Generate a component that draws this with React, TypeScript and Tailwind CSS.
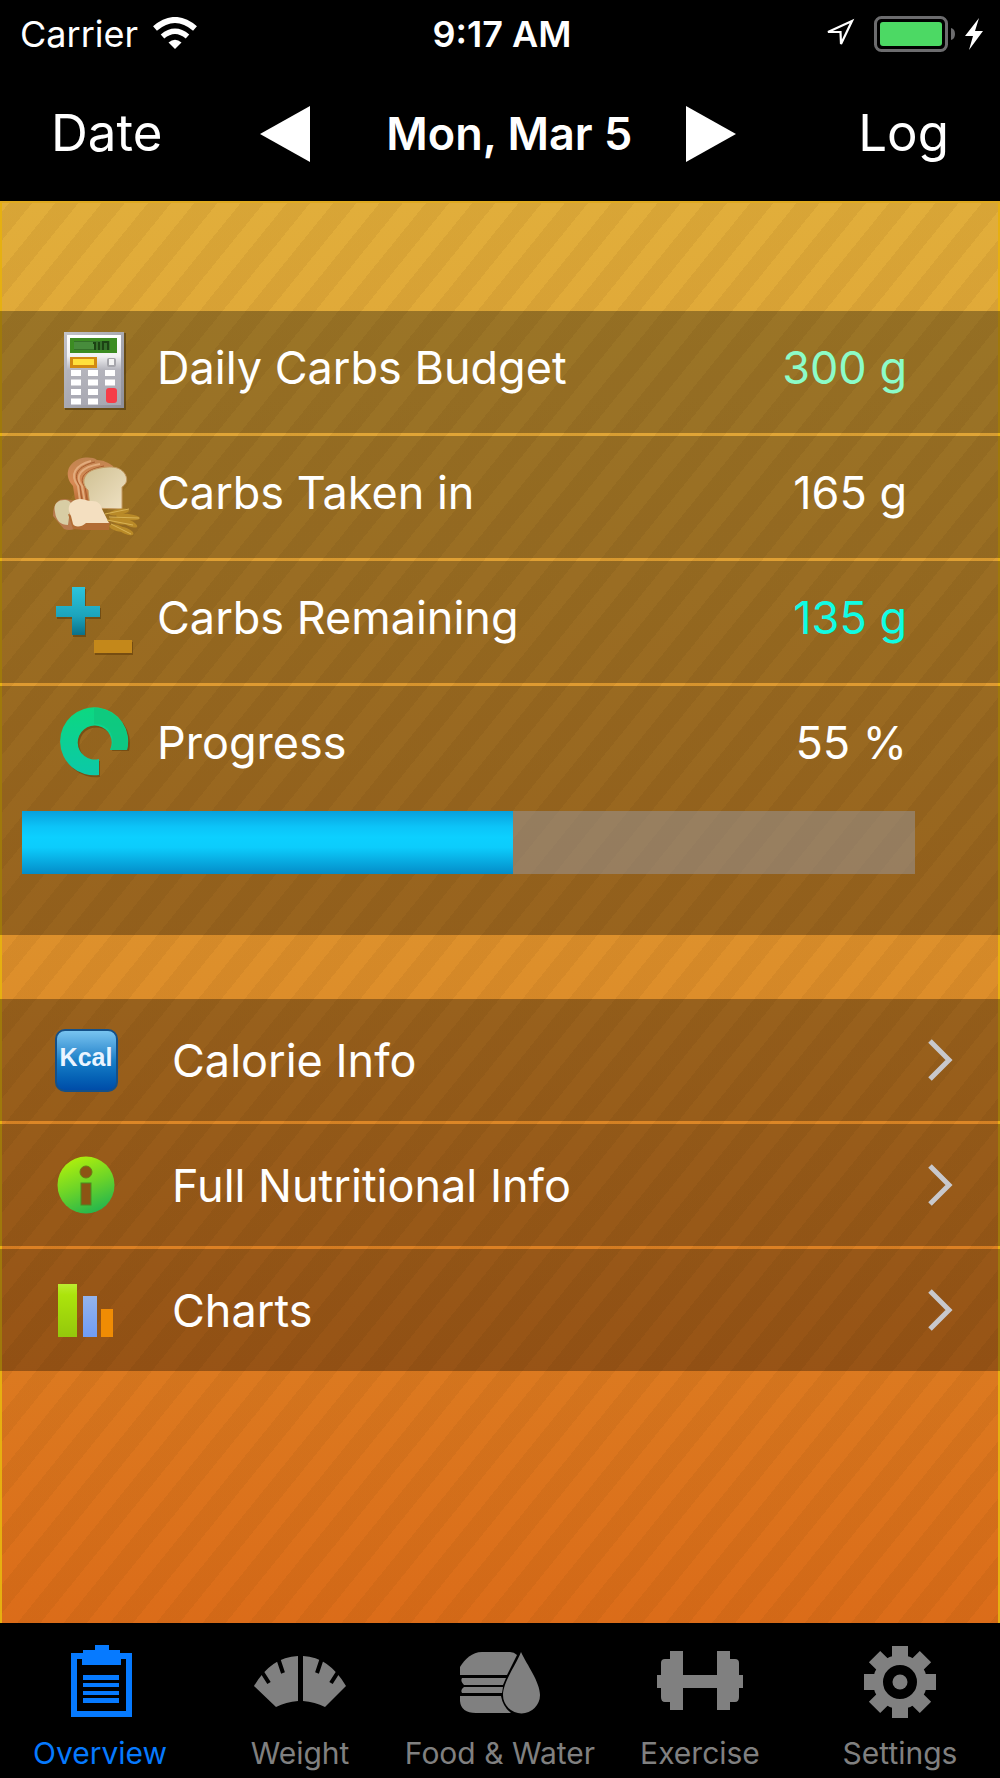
import type { ReactNode } from "react";

function CalculatorIcon() {
  const keys = [0, 1, 2, 3].flatMap((r) => [0, 1, 2].map((c) => ({ r, c })));
  return (
    <svg width="64" height="80" viewBox="0 0 64 80" aria-hidden="true">
      <defs>
        <linearGradient id="calcBody" x1="0" y1="0" x2="1" y2="1">
          <stop offset="0" stopColor="#c4c4ca" />
          <stop offset="1" stopColor="#8e8e98" />
        </linearGradient>
        <linearGradient id="calcFace" x1="0" y1="0" x2="0" y2="1">
          <stop offset="0" stopColor="#ffffff" />
          <stop offset="0.3" stopColor="#f2f2f4" />
          <stop offset="0.5" stopColor="#b4b4bc" />
          <stop offset="1" stopColor="#a8a8b2" />
        </linearGradient>
      </defs>
      <rect x="2" y="2" width="61" height="77" fill="#4a350c" opacity="0.6" />
      <rect x="1" y="1" width="60" height="76" fill="url(#calcBody)" />
      <rect x="4" y="4" width="54" height="70" fill="url(#calcFace)" />
      <rect x="7" y="7" width="47" height="15" fill="#3c8c22" />
      <rect x="11" y="10" width="36" height="9" fill="#34702a" />
      <rect x="11" y="11" width="20" height="7" fill="#478c3c" />
      <path d="M30 12h2v7M36 19v-8M40 19v-8h5v8" fill="none" stroke="#1c4214" strokeWidth="2" />
      <rect x="7" y="26" width="27" height="11" fill="#d28a10" />
      <rect x="10" y="28" width="21" height="6" fill="#ffe03c" />
      <rect x="44" y="27" width="9" height="9" rx="2" fill="#a6a6ac" />
      <rect x="46" y="28" width="5" height="6" fill="#f4f4f4" />
      {keys.map(({ r, c }) =>
        c === 2 && r > 1 ? null : (
          <rect key={`${r}-${c}`} x={8 + c * 17} y={39 + r * 9.5} width="10" height="6" fill="#fff" />
        ),
      )}
      <rect x="43" y="57" width="11" height="15" rx="3" fill="#f63c48" />
    </svg>
  );
}

function BreadIcon() {
  return (
    <svg width="92" height="80" viewBox="0 0 92 80" aria-hidden="true">
      <defs>
        <linearGradient id="crumb" x1="0" y1="0" x2="1" y2="1">
          <stop offset="0" stopColor="#cfc092" />
          <stop offset="1" stopColor="#f0e2c4" />
        </linearGradient>
        <linearGradient id="crust" x1="0" y1="0" x2="0" y2="1">
          <stop offset="0" stopColor="#c08450" />
          <stop offset="0.5" stopColor="#d88a54" />
          <stop offset="1" stopColor="#b0642c" />
        </linearGradient>
      </defs>
      <path
        d="M26 43 L24 30 C15 20 18 8 30 3 C36 1 44 1 48 4 C54 4 60 7 64 10 L56 52 L38 52 Z"
        fill="url(#crust)"
      />
      <path d="M31 45L29 30C20 18 27 9 42 5M36 47L33 30C25 20 32 11 51 8" fill="none" stroke="#e2ab7c" strokeWidth="2" />
      <path d="M33 45L31 30C23 19 29 10 46 6M39 49L36 31C29 22 35 14 55 10" fill="none" stroke="#a85c30" />
      <path
        d="M41 52 L39 34 C31 27 35 16 47 13 C55 11 70 8 76 18 C80 25 76 29 73 31 V53 Z"
        fill="url(#crumb)"
        stroke="#c49a62"
      />
      <path d="M4 60 C4 47 9 43 16 43 L27 45 L30 70 C26 74 20 75 15 73 Z" fill="#b87a4e" />
      <path d="M6 56 C4 48 9 44 15 44 C22 44 24 48 21 54 L19 69 C12 69 7 65 6 56 Z" fill="#d8cda4" />
      <path d="M19 58 L24 73 L36 74 L60 74 L61 66 L36 64 Z" fill="#b26c34" />
      <path
        d="M22 60 C16 50 23 43 31 43 C35 43 38 45 43 45 C49 45 52 48 53 53 L60 67 L37 67 C32 72 25 71 24 68 Z"
        fill="#f4dfc0"
      />
      <g fill="#b98a28">
        <ellipse cx="70" cy="56" rx="10" ry="3" transform="rotate(-10 70 56)" />
        <ellipse cx="79" cy="61" rx="12" ry="3" transform="rotate(6 79 61)" />
        <ellipse cx="70" cy="65" rx="10" ry="3" transform="rotate(12 70 65)" />
        <ellipse cx="80" cy="67" rx="9" ry="3" transform="rotate(24 80 67)" />
        <ellipse cx="68" cy="72" rx="8" ry="3" transform="rotate(16 68 72)" />
        <ellipse cx="77" cy="75" rx="8" ry="3" transform="rotate(24 77 75)" />
      </g>
      <path d="M56 58l24-5M60 61l30 1M58 64l26 5M62 68l20 10" stroke="#d8b254" strokeWidth="1" />
    </svg>
  );
}

function PlusMinusIcon() {
  return (
    <svg width="80" height="70" viewBox="0 0 80 70" aria-hidden="true">
      <defs>
        <linearGradient id="plusFill" x1="0" y1="0" x2="0" y2="1">
          <stop offset="0" stopColor="#2cc4dc" />
          <stop offset="0.6" stopColor="#1ca4bc" />
          <stop offset="1" stopColor="#0c7088" />
        </linearGradient>
      </defs>
      <path d="M18 3h13v19h15v11H31v18H18V33H2V22h16z" fill="#5c3c0c" opacity="0.6" />
      <path d="M17 1h13v19h15v11H30v18H17V31H1V20h16z" fill="url(#plusFill)" />
      <rect x="40" y="56" width="38" height="13" fill="#6a430c" opacity="0.7" />
      <rect x="39" y="54" width="38" height="13" fill="#c4881a" />
    </svg>
  );
}

function RingIcon() {
  return (
    <svg width="70" height="78" viewBox="0 0 70 78" aria-hidden="true">
      <defs>
        <linearGradient id="ringFill" x1="0" y1="0" x2="0" y2="1">
          <stop offset="0" stopColor="#0cd880" />
          <stop offset="1" stopColor="#0cc8a8" />
        </linearGradient>
      </defs>
      <path d="M40 70A34 34 0 1 1 69 44H52A17 17 0 1 0 40 54Z" fill="#5c3c0c" opacity="0.55" />
      <path d="M39 68A34 34 0 1 1 67 43H50A17 17 0 1 0 39 52Z" fill="url(#ringFill)" />
      <path d="M34 1A34 34 0 0 1 67 43H50A17 17 0 0 0 34 17Z" fill="#10c47c" opacity="0.7" />
    </svg>
  );
}

function KcalIcon() {
  return (
    <span
      aria-hidden="true"
      className="flex size-[63px] items-center justify-center rounded-[10px] border-2 border-[#145088] bg-linear-to-b from-[#78c4f0] via-[#1880c8] to-[#004ca8] pb-1 font-['Liberation_Sans'] text-[25px] font-bold text-[#eaf4ff]"
    >
      Kcal
    </span>
  );
}

function InfoIcon() {
  return (
    <svg width="58" height="58" viewBox="0 0 58 58" aria-hidden="true">
      <defs>
        <linearGradient id="infoFill" x1="0.3" y1="0" x2="0.7" y2="1">
          <stop offset="0" stopColor="#b0f00c" />
          <stop offset="0.5" stopColor="#6cd428" />
          <stop offset="1" stopColor="#20b450" />
        </linearGradient>
      </defs>
      <circle cx="29" cy="29" r="28.5" fill="url(#infoFill)" />
      <circle cx="29" cy="16" r="6" fill="#8c5414" stroke="#6a7c14" />
      <rect x="24" y="27" width="10" height="22" fill="#8c5414" stroke="#4a8c20" />
    </svg>
  );
}

function BarsIcon() {
  return (
    <svg width="56" height="54" viewBox="0 0 56 54" aria-hidden="true">
      <defs>
        <linearGradient id="barGreen" x1="0" y1="0" x2="0" y2="1">
          <stop offset="0" stopColor="#bcec30" />
          <stop offset="0.2" stopColor="#ace40c" />
          <stop offset="1" stopColor="#94c80c" />
        </linearGradient>
        <linearGradient id="barBlue" x1="0" y1="0" x2="0" y2="1">
          <stop offset="0" stopColor="#94b4ec" />
          <stop offset="1" stopColor="#709cf4" />
        </linearGradient>
      </defs>
      <rect x="0" y="1" width="19" height="53" fill="url(#barGreen)" />
      <rect x="25" y="13" width="14" height="41" fill="url(#barBlue)" />
      <rect x="43" y="26" width="12" height="28" fill="#f08c04" />
    </svg>
  );
}

function ClipboardIcon() {
  return (
    <svg width="62" height="74" viewBox="0 0 62 74" fill="currentColor" aria-hidden="true" className="ml-1">
      <path d="M0 8H12V5H24V0H38V5H49V8H61V72H0ZM6 14V66H55V14H50V20H11V14Z" fillRule="evenodd" />
      <path d="M12 30h36v5H12zM12 38h36v4H12zM12 46h36v4H12zM12 53h36v5H12z" />
    </svg>
  );
}

function ScaleIcon() {
  return (
    <svg width="92" height="74" viewBox="0 0 92 74" aria-hidden="true">
      <path d="M0 41Q17 12 44 11V56Q32 57 22 62Z" fill="currentColor" />
      <path d="M92 41Q75 12 49 11V56Q61 57 71 62Z" fill="currentColor" />
      <path d="M8 27l7 11M24 13l5 15M84 27l-7 11M68 13l-5 15" stroke="#000" strokeWidth="4" />
    </svg>
  );
}

function FoodIcon() {
  return (
    <svg width="80" height="74" viewBox="0 0 80 74" fill="currentColor" aria-hidden="true">
      <path d="M0 30V22C5 14 12 7 22 7H50Q54 7 57 10L47 30Z" />
      <path d="M2 33H46L43 40H4Q0 36 2 33ZM4 42H43L42 48H2Q0 45 4 42Z" />
      <path d="M0 51H41Q43 62 51 68H16Q1 68 0 56Z" />
      <path d="M61 7C67 20 80 37 80 50A18.500 18.500 0 0 1 43 50C43 37 56 20 61 7Z" />
    </svg>
  );
}

function DumbbellIcon() {
  return (
    <svg width="86" height="74" viewBox="0 0 86 74" fill="currentColor" aria-hidden="true">
      <path d="M13 6H26V30H60V6H73V14H78Q82 14 82 18V30H86V43H82V52Q82 57 78 57H73V65H60V43H26V65H13V57H8Q4 57 4 52V43H0V30H4V18Q4 14 8 14H13Z" />
    </svg>
  );
}

function GearIcon() {
  return (
    <svg width="74" height="74" viewBox="0 0 74 74" fill="currentColor" aria-hidden="true">
      {[0, 45, 90, 135].map((a) => (
        <path key={a} d="M29 1H45V15H29ZM29 59H45V73H29Z" transform={`rotate(${a} 37 37)`} />
      ))}
      <circle cx="37" cy="37" r="22" fill="none" stroke="currentColor" strokeWidth="10" />
      <circle cx="37" cy="37" r="7.500" />
    </svg>
  );
}

function Stat({ icon, label, value, tone }: { icon: ReactNode; label: string; value: string; tone: string }) {
  return (
    <div className="flex h-[122px] items-center pr-[93px]">
      <span className="flex w-[157px] shrink-0 justify-center pb-0.5 pl-8">{icon}</span>
      <dt className="flex-1 pb-2">{label}</dt>
      <dd className={`pb-2 ${tone}`}>{value}</dd>
    </div>
  );
}

const links = [
  { label: "Calorie Info", icon: <KcalIcon /> },
  { label: "Full Nutritional Info", icon: <InfoIcon /> },
  { label: "Charts", icon: <BarsIcon /> },
];

const tabs = [
  { label: "Overview", icon: <ClipboardIcon />, active: true },
  { label: "Weight", icon: <ScaleIcon />, active: false },
  { label: "Food & Water", icon: <FoodIcon />, active: false },
  { label: "Exercise", icon: <DumbbellIcon />, active: false },
  { label: "Settings", icon: <GearIcon />, active: false },
];

export default function App() {
  const percent = 55;
  return (
    <div className="flex min-h-screen flex-col bg-black font-[Inter,sans-serif] text-white">
      <div className="grid h-[68px] grid-cols-3 items-center pr-4 pl-5 text-[36px]">
        <div className="flex items-center gap-3.5">
          <span>Carrier</span>
          <svg width="46" height="34" viewBox="0 0 46 34" role="img" aria-label="Wi-Fi">
            <path d="M3 11.500Q23 -5.500 43 11.500" fill="none" stroke="#fff" strokeWidth="6" />
            <path d="M10.500 19.500Q23 9 35.500 19.500" fill="none" stroke="#fff" strokeWidth="5.500" />
            <path d="M16.500 25.500Q23 20 29.500 25.500L23 32Z" fill="#fff" />
          </svg>
        </div>
        <span className="text-center font-semibold">9:17 AM</span>
        <div className="flex items-center justify-end">
          <svg width="32" height="34" viewBox="0 0 32 34" role="img" aria-label="Location" className="mr-[18px]">
            <path d="M4 15L28 4L17 27L16.500 15Z" fill="none" stroke="#fff" strokeWidth="2.200" />
          </svg>
          <svg width="82" height="36" viewBox="0 0 82 36" role="img" aria-label="Battery charged" className="mr-2">
            <rect x="1.500" y="1.500" width="71" height="33" rx="6" fill="none" stroke="#6c6c6e" strokeWidth="3" />
            <rect x="6" y="6" width="62" height="24" rx="3" fill="#4cd964" />
            <path d="M77 12Q81 13 81 18T77 24Z" fill="#6c6c6e" />
          </svg>
          <svg width="20" height="34" viewBox="0 0 20 34" role="img" aria-label="Charging">
            <path d="M15 1L1 19H9L5 33L19 14H11Z" fill="#fff" />
          </svg>
        </div>
      </div>

      <header className="flex h-[133px] items-center justify-between px-[51px] pb-0.5">
        <button type="button" className="text-[51px]">Date</button>
        <div className="flex items-center pr-6">
          <button type="button" aria-label="Previous day" className="mr-[76px]">
            <svg width="50" height="56" viewBox="0 0 50 56" fill="#fff"><path d="M0 28L50 0V56Z" /></svg>
          </button>
          <h1 className="text-[45px] font-semibold">Mon, Mar 5</h1>
          <button type="button" aria-label="Next day" className="ml-[54px]">
            <svg width="50" height="56" viewBox="0 0 50 56" fill="#fff"><path d="M50 28L0 0V56Z" /></svg>
          </button>
        </div>
        <button type="button" className="text-[51px]">Log</button>
      </header>

      <main className="flex-1 border-t-2 border-[#e0aa20] bg-[repeating-linear-gradient(129deg,transparent_0_7px,rgba(110,60,0,0.08)_7px_25px,transparent_25px_36px),linear-gradient(#e1ae3b,#dd8f2b_54%,#db6c19)] pt-[108px] text-[45px] shadow-[inset_2px_0_#e6b010,inset_-2px_0_#e6b010]">
        <dl className="flex flex-col gap-[3px] *:bg-black/31">
          <Stat icon={<CalculatorIcon />} label="Daily Carbs Budget" value="300 g" tone="text-[#8cfcc8]" />
          <Stat icon={<BreadIcon />} label="Carbs Taken in" value="165 g" tone="text-white" />
          <Stat icon={<PlusMinusIcon />} label="Carbs Remaining" value="135 g" tone="text-[#10fce4]" />
          <div className="h-[249px]">
            <Stat icon={<RingIcon />} label="Progress" value="55 %" tone="text-white" />
            <div
              role="progressbar"
              aria-label="Progress"
              aria-valuenow={percent}
              className="mt-[3px] mr-[85px] ml-[22px] h-[63px] bg-[#9898a0]/50"
            >
              <div
                className="h-full bg-[linear-gradient(#08a0dc,#0cc4f8_25%,#0cd0ff_42%,#0cccfc_58%,#048cc8)]"
                style={{ width: `${percent}%` }}
              />
            </div>
          </div>
        </dl>

        <nav aria-label="Details" className="mt-16 flex flex-col gap-[3px]">
          {links.map((l) => (
            <a key={l.label} href="#" className="flex h-[122px] items-center bg-black/31 pr-[47px]">
              <span className="flex w-[172px] justify-center">{l.icon}</span>
              <span className="flex-1 pt-0.5">{l.label}</span>
              <svg width="26" height="42" viewBox="0 0 26 42" aria-hidden="true">
                <path d="M3 2L22 21L3 40" fill="none" stroke="#c8c8cc" strokeWidth="5" />
              </svg>
            </a>
          ))}
        </nav>
      </main>

      <nav aria-label="Sections" className="grid h-[155px] grid-cols-5 text-[30px] whitespace-nowrap">
        {tabs.map((t) => (
          <button
            key={t.label}
            type="button"
            aria-current={t.active ? "page" : undefined}
            className={`flex flex-col items-center gap-3 pt-[22px] ${t.active ? "text-[#067aff]" : "text-[#808080]"}`}
          >
            {t.icon}
            <span>{t.label}</span>
          </button>
        ))}
      </nav>
    </div>
  );
}
